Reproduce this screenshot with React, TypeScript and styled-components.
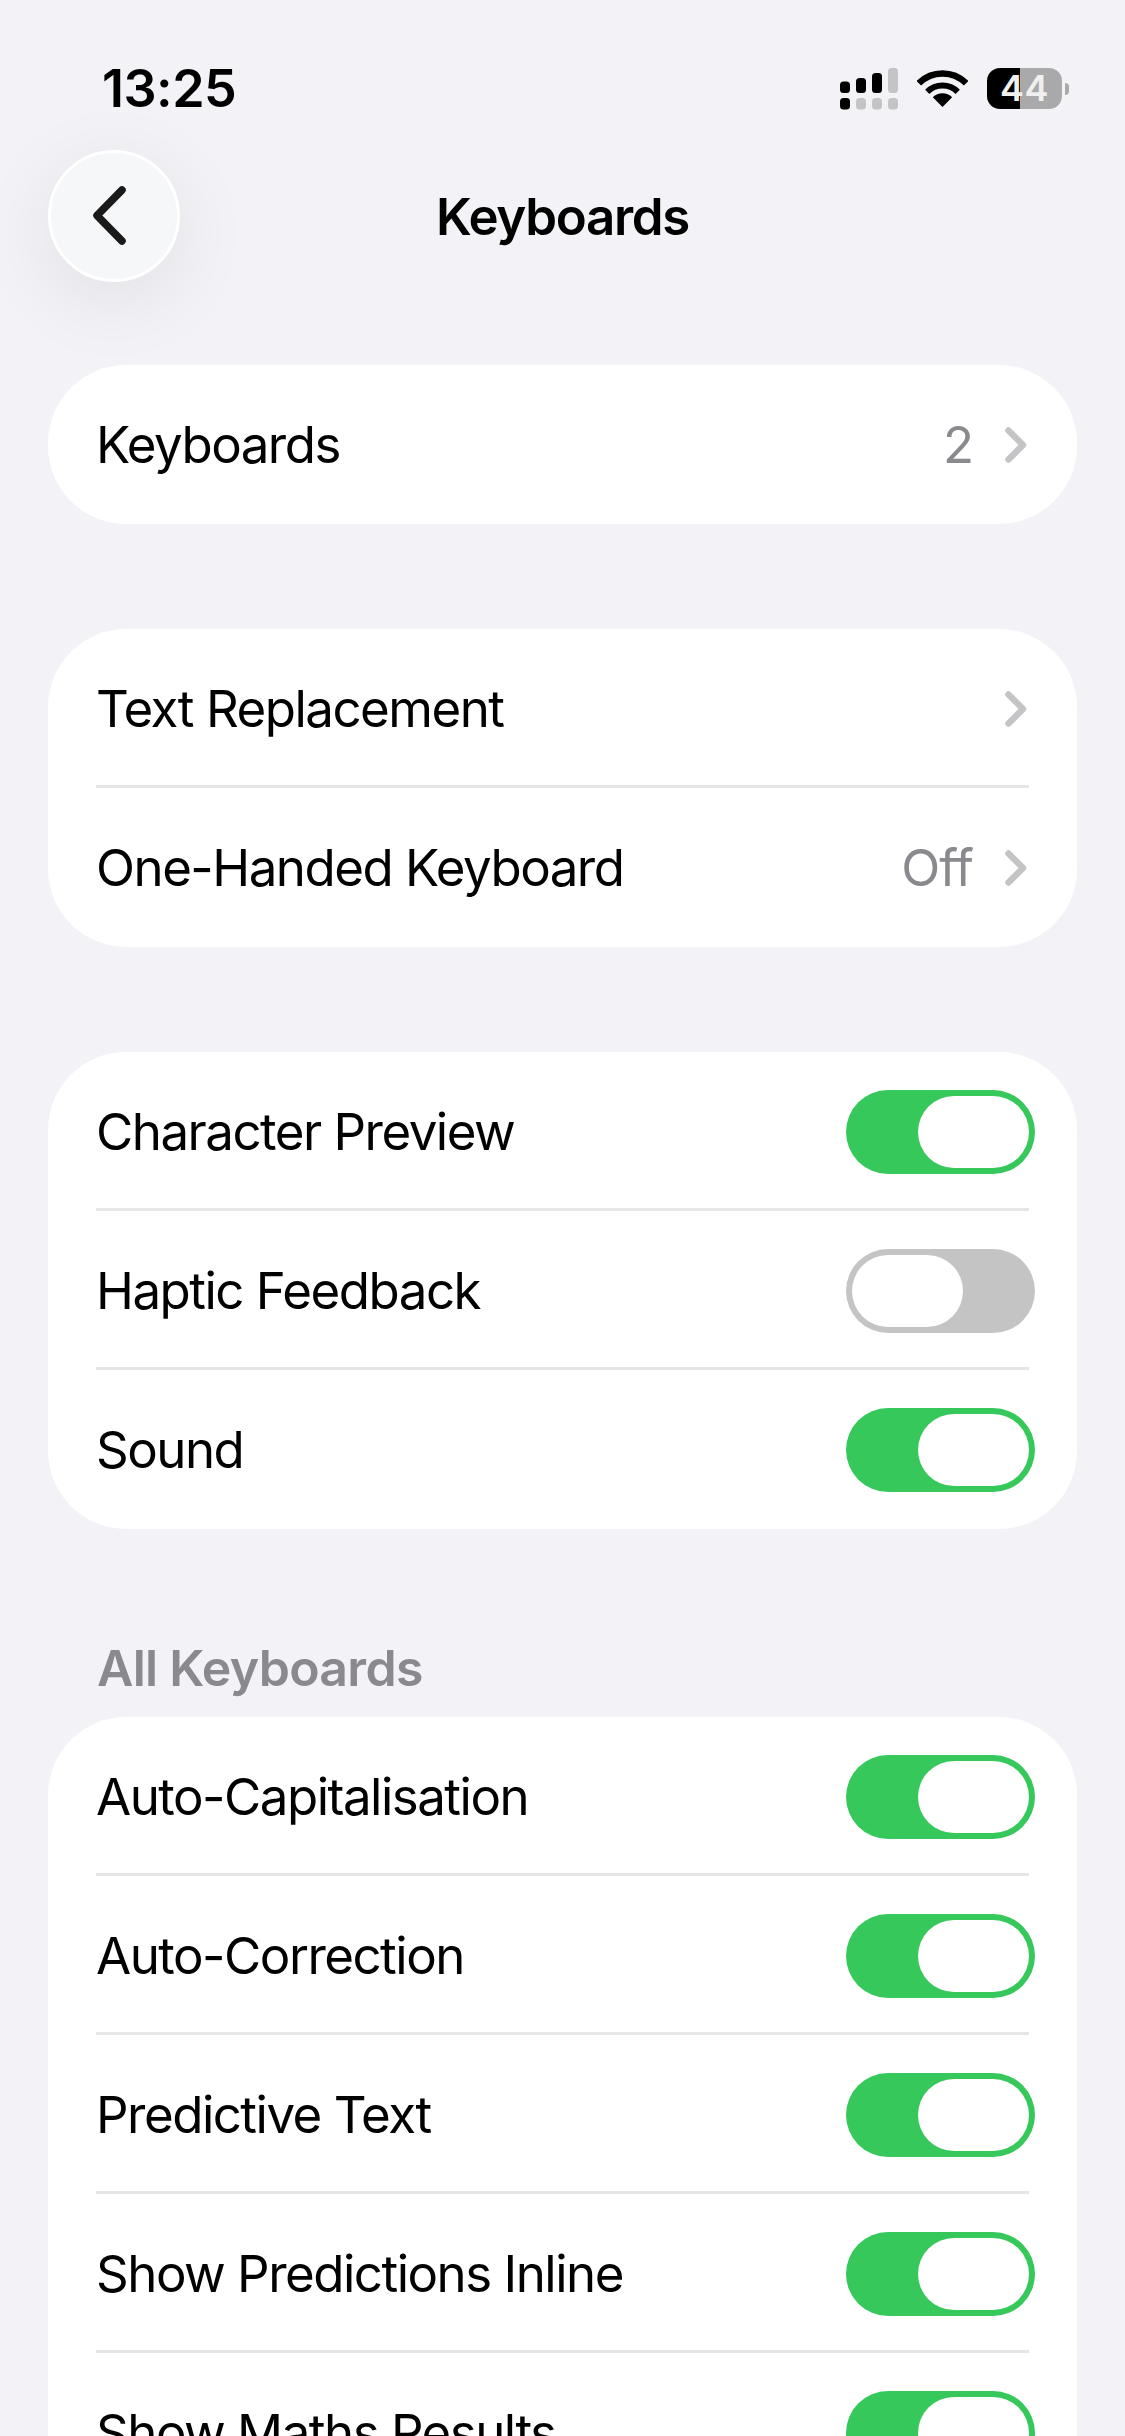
import React from 'react';
import styled, { createGlobalStyle } from 'styled-components';

const GlobalStyle = createGlobalStyle`
  html, body {
    margin: 0;
    padding: 0;
    background: #f2f2f7;
  }
  body {
    font-family: Inter, "Noto Sans", "Liberation Sans", sans-serif;
    -webkit-font-smoothing: antialiased;
  }
`;

const Page = styled.div`
  width: 1125px;
  height: 2436px;
  overflow: hidden;
  background: #f2f2f7;
  color: #000;
`;

const StatusBar = styled.div`
  height: 150px;
  box-sizing: border-box;
  padding: 65px 56px 0 102px;
  display: flex;
  justify-content: space-between;
  align-items: flex-start;
`;

const Time = styled.div`
  font-size: 52px;
  line-height: 48px;
  font-weight: 600;
  letter-spacing: -0.5px;
`;

const StatusIcons = styled.div`
  display: flex;
  align-items: flex-start;
  gap: 19px;
  padding-top: 3px;
`;

const Battery = styled.div`
  width: 75px;
  height: 41px;
  border-radius: 13px;
  background: linear-gradient(90deg, #000 0 33px, #a9a9ab 33px 100%);
  color: #f0f0f0;
  font-size: 36px;
  font-weight: 600;
  letter-spacing: 0.5px;
  line-height: 41px;
  text-align: center;
`;

const BatteryWrap = styled.div`
  display: flex;
  align-items: center;
  gap: 3px;
`;

const BatteryNub = styled.div`
  width: 4px;
  height: 12px;
  background: #a9a9ab;
  border-radius: 0 6px 6px 0;
`;

const NavBar = styled.div`
  display: grid;
  grid-template-columns: 180px 1fr 180px;
  align-items: center;
  height: 132px;
  padding-left: 48px;
  padding-right: 48px;
  margin-bottom: 83px;
  width: 1029px;
`;

const BackButton = styled.button`
  width: 132px;
  height: 132px;
  padding: 0;
  box-sizing: border-box;
  border-radius: 50%;
  border: 3px solid #fff;
  background: #f6f7f8;
  box-shadow: 0 18px 80px rgba(0, 0, 0, 0.08);
  display: flex;
  align-items: center;
  justify-content: center;
`;

const NavTitle = styled.h1`
  margin: 2px 0 0;
  font-size: 51px;
  line-height: 60px;
  font-weight: 600;
  letter-spacing: -1.3px;
  text-align: center;
`;

const Content = styled.div`
  padding: 0 48px;
  display: flex;
  flex-direction: column;
`;

const Card = styled.div`
  background: #fff;
  border-radius: 78px;
  margin-bottom: 105px;
`;

const Row = styled.div`
  height: 159px;
  box-sizing: border-box;
  margin: 0 48px;
  padding-top: 4px;
  display: flex;
  align-items: center;
  justify-content: space-between;
  border-bottom: 3px solid #e6e6e8;

  &:last-child {
    padding-top: 1px;
    border-bottom: none;
  }
`;

const Label = styled.span`
  font-size: 51px;
  letter-spacing: -1.5px;
  line-height: 60px;
`;

const Accessory = styled.div`
  display: flex;
  align-items: center;
  gap: 32px;
  padding-right: 2px;
`;

const Value = styled.span`
  font-size: 51px;
  line-height: 60px;
  letter-spacing: -1px;
  color: #8a8a8e;
`;

const Toggle = styled.div<{ $on: boolean }>`
  width: 189px;
  height: 84px;
  margin-right: -6px;
  padding: 6px;
  box-sizing: border-box;
  border-radius: 42px;
  background: ${(p) => (p.$on ? '#37c85b' : '#c4c4c5')};
  display: flex;
  justify-content: ${(p) => (p.$on ? 'flex-end' : 'flex-start')};
`;

const Knob = styled.div`
  width: 111px;
  height: 72px;
  border-radius: 36px;
  background: #fff;
`;

const SectionHeader = styled.div`
  padding-left: 49px;
  margin-top: 4px;
  margin-bottom: 19px;
  font-size: 50px;
  line-height: 60px;
  font-weight: 600;
  letter-spacing: -0.7px;
  color: #8a8a8e;
`;

const Signal = () => (
  <svg width="58" height="42" viewBox="0 0 58 42">
    <rect x="0" y="13.5" width="10" height="11.5" rx="3.5" fill="#000" />
    <rect x="16" y="10" width="10" height="15" rx="3.5" fill="#000" />
    <rect x="32" y="5" width="10" height="20" rx="3.5" fill="#000" />
    <rect x="48" y="0" width="10" height="25" rx="3.5" fill="#c4c4c6" />
    <rect x="0" y="30" width="10" height="11.5" rx="3.5" fill="#000" />
    <rect x="16" y="30" width="10" height="11.5" rx="3.5" fill="#c4c4c6" />
    <rect x="32" y="30" width="10" height="11.5" rx="3.5" fill="#c4c4c6" />
    <rect x="48" y="30" width="10" height="11.5" rx="3.5" fill="#c4c4c6" />
  </svg>
);

const Wifi = () => (
  <svg width="51" height="37" viewBox="0 0 51 37" style={{ marginTop: 2 }}>
    <path d="M25.5 37 L15.8 27.3 A13.7 13.7 0 0 1 35.2 27.3 Z" fill="#000" />
    <path d="M10.3 21.8 A21.5 21.5 0 0 1 40.7 21.8" fill="none" stroke="#000" strokeWidth="6" />
    <path d="M1.8 13.3 A33.5 33.5 0 0 1 49.2 13.3" fill="none" stroke="#000" strokeWidth="6.5" />
  </svg>
);

const BackChevron = () => (
  <svg width="36" height="60" viewBox="0 0 36 60" style={{ marginRight: 8 }}>
    <path d="M30 4 L5 29.5 L30 55" fill="none" stroke="#1a1a1a" strokeWidth="7.5" strokeLinecap="round" strokeLinejoin="round" />
  </svg>
);

const Chevron = () => (
  <svg width="22" height="36" viewBox="0 0 22 36">
    <path d="M3.5 3.5 L18 18 L3.5 32.5" fill="none" stroke="#c4c4c6" strokeWidth="6.5" strokeLinecap="round" strokeLinejoin="round" />
  </svg>
);

const NavRow = ({ label, value }: { label: string; value?: string }) => (
  <Row>
    <Label>{label}</Label>
    <Accessory>
      {value && <Value>{value}</Value>}
      <Chevron />
    </Accessory>
  </Row>
);

const ToggleRow = ({ label, on = true }: { label: string; on?: boolean }) => (
  <Row>
    <Label>{label}</Label>
    <Toggle $on={on}>
      <Knob />
    </Toggle>
  </Row>
);

const App: React.FC = () => {
  return (
    <Page>
      <GlobalStyle />
      <StatusBar>
        <Time>13:25</Time>
        <StatusIcons>
          <Signal />
          <Wifi />
          <BatteryWrap>
            <Battery>44</Battery>
            <BatteryNub />
          </BatteryWrap>
        </StatusIcons>
      </StatusBar>
      <NavBar>
        <BackButton aria-label="Back">
          <BackChevron />
        </BackButton>
        <NavTitle>Keyboards</NavTitle>
      </NavBar>
      <Content>
        <Card>
          <NavRow label="Keyboards" value="2" />
        </Card>
        <Card>
          <NavRow label="Text Replacement" />
          <NavRow label="One-Handed Keyboard" value="Off" />
        </Card>
        <Card>
          <ToggleRow label="Character Preview" />
          <ToggleRow label="Haptic Feedback" on={false} />
          <ToggleRow label="Sound" />
        </Card>
        <SectionHeader>All Keyboards</SectionHeader>
        <Card>
          <ToggleRow label="Auto-Capitalisation" />
          <ToggleRow label="Auto-Correction" />
          <ToggleRow label="Predictive Text" />
          <ToggleRow label="Show Predictions Inline" />
          <ToggleRow label="Show Maths Results" />
        </Card>
      </Content>
    </Page>
  );
};

export default App;
